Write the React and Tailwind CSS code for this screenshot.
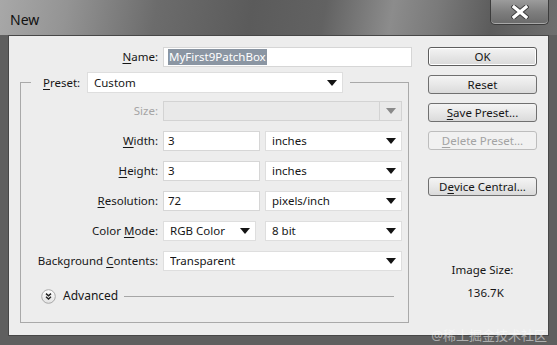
const U = ({ children }) => <span className="underline underline-offset-[2px] decoration-[1px]">{children}</span>;

function Caret({ color = "#141414" }) {
  return (
    <svg width="10" height="6" viewBox="0 0 10 6" className="shrink-0">
      <path d="M0 0H10L5 6Z" fill={color} />
    </svg>
  );
}

function Input({ className = "", children }) {
  return (
    <div className={`h-[20px] bg-white border border-[#d6d6d6] flex items-center pl-[4px] ${className}`}>
      {children}
    </div>
  );
}

function Select({ value, className = "", h = "h-[20px]" }) {
  return (
    <div className={`${h} bg-white border border-[#dedede] flex items-center pl-[6px] pr-[5px] ${className}`}>
      <span className="flex-1 truncate">{value}</span>
      <Caret />
    </div>
  );
}

function Row({ label, disabled, children }) {
  return (
    <div className="flex items-center gap-[5px]">
      <div className={`w-[137px] text-right leading-[16px] ${disabled ? "text-[#a5a5a5]" : ""}`}>{label}</div>
      {children}
    </div>
  );
}

function Btn({ children, primary, disabled }) {
  return (
    <div
      className={`h-[19px] w-[109px] rounded-[3px] flex items-center justify-center leading-[16px] ${
        disabled
          ? "border border-[#bdbdbd] bg-[#f1f1f1] text-[#a3a3a3]"
          : primary
          ? "border border-[#5e5e5e] bg-[linear-gradient(#f4f4f4,#e6e6e6_50%,#d9d9d9)] shadow-[inset_0_0_0_1px_#ffffff]"
          : "border border-[#707070] bg-[linear-gradient(#f4f4f4,#e8e8e8_50%,#dadada)]"
      }`}
    >
      {children}
    </div>
  );
}

function AdvancedIcon() {
  return (
    <svg width="15" height="15" viewBox="0 0 15 15" className="shrink-0">
      <defs>
        <linearGradient id="adv" x1="0" y1="0" x2="0" y2="1">
          <stop offset="0" stopColor="#ffffff" />
          <stop offset="1" stopColor="#e2e2e2" />
        </linearGradient>
      </defs>
      <circle cx="7.5" cy="7.5" r="6.8" fill="url(#adv)" stroke="#a8a8a8" strokeWidth="1" />
      <path d="M5 4.6L7.5 6.8L10 4.6M5 7.8L7.5 10L10 7.8" fill="none" stroke="#222" strokeWidth="1.4" />
    </svg>
  );
}

export default function App() {
  return (
    <div className="relative w-[557px] h-[345px] overflow-hidden bg-[#5f5f5f] font-['Noto_Sans',sans-serif] text-[11.5px] text-[#161616] flex flex-col">
      {/* title bar */}
      <div className="h-[35px] shrink-0 flex items-start justify-between bg-[linear-gradient(100deg,#a8a8a8_0%,#949494_12%,#6c6c6c_28%,#5b5b5b_45%,#626262_58%,#8c8c8c_70%,#7a7a7a_78%,#5c5c5c_88%,#6f6f6f_100%)]">
        <div className="ml-[10px] mt-[10px] text-[14px] leading-[20px] text-[#111111]">New</div>
        <div className="mr-[8px] w-[59px] h-[25px] rounded-b-[5px] border border-t-0 border-[#3c3c3c] bg-[linear-gradient(#9c9c9c,#7e7e7e_50%,#6a6a6a)] shadow-[inset_0_-1px_0_#a8a8a8] flex items-center justify-center">
          <svg width="18" height="14" viewBox="0 0 18 14">
            <path d="M3 2L15 12M15 2L3 12" stroke="#3a3a3a" strokeWidth="5" strokeLinecap="square" />
            <path d="M3 2L15 12M15 2L3 12" stroke="#ffffff" strokeWidth="3.2" strokeLinecap="square" />
          </svg>
        </div>
      </div>

      {/* client area */}
      <div className="mx-[8px] h-[301px] shrink-0 border border-[#474747] bg-[#ededed] flex">
        {/* left column */}
        <div className="w-[419px] pt-[11px]">
          <div className="flex items-center gap-[5px]">
            <div className="w-[149px] text-right leading-[16px]"><U>N</U>ame:</div>
            <Input className="w-[249px]">
              <span className="bg-[#8b96a3] text-white leading-[16px] px-[1px]">MyFirst9PatchBox</span>
            </Input>
          </div>

          <fieldset className="mt-[5px] ml-[11px] w-[389px] border border-[#a9a9a9] px-0 pt-[8px] pb-[18px]">
            <legend className="ml-[10px] pl-[12px] pr-[7px]">
              <div className="flex items-center">
                <div className="w-[44px] leading-[16px]"><U>P</U>reset:</div>
                <Select value="Custom" className="w-[256px]" h="h-[21px]" />
              </div>
            </legend>

            <div className="flex flex-col gap-[10px]">
              <Row label="Size:" disabled>
                <div className="h-[20px] w-[239px] border border-[#d3d3d3] bg-[#e9e9e9] flex">
                  <div className="flex-1" />
                  <div className="w-[22px] border-l border-[#d3d3d3] flex items-center justify-center">
                    <Caret color="#8a8a8a" />
                  </div>
                </div>
              </Row>
              <Row label={<><U>W</U>idth:</>}>
                <Input className="w-[97px]">3</Input>
                <Select value="inches" className="w-[137px]" />
              </Row>
              <Row label={<><U>H</U>eight:</>}>
                <Input className="w-[97px]">3</Input>
                <Select value="inches" className="w-[137px]" />
              </Row>
              <Row label={<><U>R</U>esolution:</>}>
                <Input className="w-[97px]">72</Input>
                <Select value="pixels/inch" className="w-[137px]" />
              </Row>
              <Row label={<>Color <U>M</U>ode:</>}>
                <Select value="RGB Color" className="w-[93px]" />
                <Select value="8 bit" className="w-[137px] ml-[4px]" />
              </Row>
              <Row label={<>Background <U>C</U>ontents:</>}>
                <Select value="Transparent" className="w-[239px]" />
              </Row>
            </div>

            <div className="mt-[17px] h-[16px] ml-[20px] flex items-center">
              <AdvancedIcon />
              <span className="ml-[7px] leading-[16px] text-[12px]">Advanced</span>
              <div className="ml-[6px] w-[270px] h-px bg-[#a6a6a6]" />
            </div>
          </fieldset>
        </div>

        {/* right column */}
        <div className="w-[109px] pt-[11px] flex flex-col items-center">
          <div className="flex flex-col gap-[9px]">
            <Btn primary>OK</Btn>
            <Btn>Reset</Btn>
            <Btn><U>S</U>ave Preset...</Btn>
            <Btn disabled><U>D</U>elete Preset...</Btn>
          </div>
          <div className="mt-[27px]">
            <Btn>D<U>e</U>vice Central...</Btn>
          </div>
          <div className="mt-[66px] leading-[16px]">Image Size:</div>
          <div className="mt-[7px] leading-[16px] pl-[6px]">136.7K</div>
        </div>
      </div>

      {/* watermark */}
      <div className="absolute right-[10px] bottom-[1px] text-[13px] leading-[18px] text-white/50 font-['Noto_Sans','Noto_Sans_CJK_SC',sans-serif]">
        @稀土掘金技术社区
      </div>
    </div>
  );
}
